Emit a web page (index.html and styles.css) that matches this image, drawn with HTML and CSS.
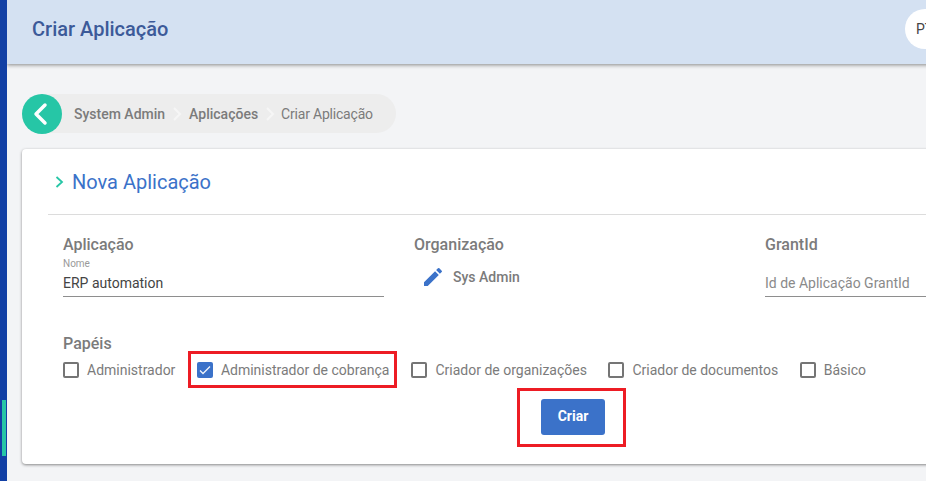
FILE: index.html
```html
<!DOCTYPE html>
<html lang="pt">
<head>
  <meta charset="UTF-8" />
  <title>Criar Aplicação</title>
  <link rel="stylesheet" href="styles.css">
</head>
<body>
  <div class="rail">
    <div class="rail-mark"></div>
  </div>

  <div class="page">
    <header class="topbar">
      <h1>Criar Aplicação</h1>
      <div class="lang">PT</div>
    </header>

    <div class="content">
      <nav class="crumbs">
        <a class="back" href="#">
          <svg width="40" height="40" viewBox="0 0 40 40"><path d="M23 11 L14 20 L23 29" fill="none" stroke="#fff" stroke-width="3.5" stroke-linecap="round" stroke-linejoin="round"/></svg>
        </a>
        <a class="crumb" href="#">System Admin</a>
        <svg class="sep" width="12" height="16" viewBox="0 0 12 16"><path d="M3 2 L9 8 L3 14" fill="none" stroke="#f6f6f6" stroke-width="2"/></svg>
        <a class="crumb" href="#">Aplicações</a>
        <svg class="sep" width="12" height="16" viewBox="0 0 12 16"><path d="M3 2 L9 8 L3 14" fill="none" stroke="#f6f6f6" stroke-width="2"/></svg>
        <span class="crumb current">Criar Aplicação</span>
      </nav>

      <section class="card">
        <div class="card-head">
          <svg width="9" height="12" viewBox="0 0 9 12"><path d="M1.5 1 L7 6 L1.5 11" fill="none" stroke="#26c6a6" stroke-width="1.8"/></svg>
          <h2>Nova Aplicação</h2>
        </div>

        <div class="fields">
          <div class="field">
            <h3>Aplicação</h3>
            <div class="input has-value">
              <label>Nome</label>
              <span>ERP automation</span>
            </div>
          </div>
          <div class="field">
            <h3>Organização</h3>
            <div class="org">
              <svg width="24" height="24" viewBox="0 0 24 24"><path fill="#3b72c9" d="M3 17.25V21h3.75L17.81 9.94l-3.75-3.75L3 17.25zM20.71 7.04a1 1 0 0 0 0-1.41l-2.34-2.34a1 1 0 0 0-1.41 0l-1.83 1.83 3.75 3.75 1.83-1.83z"/></svg>
              <span>Sys Admin</span>
            </div>
          </div>
          <div class="field">
            <h3>GrantId</h3>
            <div class="input">
              <span class="placeholder">Id de Aplicação GrantId</span>
            </div>
          </div>
        </div>

        <h3 class="roles-title">Papéis</h3>
        <div class="roles">
          <label class="role"><span class="box"></span>Administrador</label>
          <label class="role marked">
            <span class="box checked">
              <svg width="16" height="16" viewBox="0 0 16 16"><path d="M3 8.5 L6 11.5 L13 4.5" fill="none" stroke="#f2f5fb" stroke-width="1.3"/></svg>
            </span>Administrador de cobrança</label>
          <label class="role"><span class="box"></span>Criador de organizações</label>
          <label class="role"><span class="box"></span>Criador de documentos</label>
          <label class="role"><span class="box"></span>Básico</label>
        </div>

        <div class="actions">
          <div class="marked-btn">
            <button type="button">Criar</button>
          </div>
        </div>
      </section>
    </div>
  </div>
</body>
</html>
```

FILE: styles.css
```css
* {
  box-sizing: border-box;
  margin: 0;
  padding: 0;
}

html, body {
  height: 100%;
  overflow: hidden;
}

body {
  font-family: Roboto, "Liberation Sans", sans-serif;
  display: flex;
  background-color: #f3f4f6;
  color: #7b7b7b;
}

/* Left rail */
.rail {
  flex: 0 0 7px;
  background-color: #1240a5;
  position: relative;
}

.rail-mark {
  position: absolute;
  left: 2px;
  top: 400px;
  width: 4px;
  height: 56px;
  background-color: #26c6a6;
}

.page {
  flex: 0 0 1140px;
}

/* Top bar */
.topbar {
  height: 64px;
  background-color: #d4e1f2;
  box-shadow: 0 1px 4px rgba(0, 0, 0, 0.45);
  padding: 0 202px 6px 25px;
  display: flex;
  align-items: center;
  justify-content: space-between;
}

.topbar h1 {
  font-size: 20px;
  font-weight: 500;
  color: #3c5a99;
}

.lang {
  width: 40px;
  height: 40px;
  border-radius: 50%;
  background: #fff;
  color: #444;
  font-size: 14px;
  line-height: 40px;
  padding-left: 11px;
}

.content {
  padding: 30px 0 0 15px;
}

/* Breadcrumb */
.crumbs {
  display: flex;
  align-items: center;
  height: 39px;
  width: 374px;
  background-color: #ededed;
  border-radius: 20px;
  font-size: 14px;
}

.back {
  flex: 0 0 40px;
  height: 40px;
  border-radius: 50%;
  background-color: #26c6a6;
  margin-right: 12px;
}

.crumb {
  color: #7b7b7b;
  font-weight: 500;
  text-decoration: none;
}

.crumb.current {
  font-weight: 400;
  letter-spacing: -0.2px;
  margin-left: -1px;
}

.sep {
  margin: 0 6px;
}

/* Card */
.card {
  width: 1102px;
  height: 315px;
  margin-top: 16px;
  background: #fff;
  border-radius: 4px;
  box-shadow: 0 1px 3px rgba(0, 0, 0, 0.45);
  padding: 0 26px;
}

.card-head {
  height: 66px;
  border-bottom: 1px solid #dcdcdc;
  display: flex;
  align-items: center;
  gap: 8px;
  padding-left: 7px;
}

.card-head h2 {
  font-size: 20px;
  font-weight: 400;
  color: #3b72c9;
}

h3 {
  font-size: 16px;
  font-weight: 500;
  color: #7b7b7b;
}

.fields {
  display: flex;
  padding: 20px 0 0 15px;
}

.field {
  flex: 0 0 351px;
}

.input {
  width: 321px;
  height: 43px;
  border-bottom: 1px solid #8e8e8e;
  display: flex;
  flex-direction: column;
  justify-content: flex-end;
  padding-bottom: 5px;
  font-size: 14px;
  color: #444;
}

.input label {
  font-size: 10px;
  color: #9a9a9a;
  margin-bottom: 6px;
}

.placeholder {
  color: #8a8a8a;
}

.org {
  display: flex;
  align-items: center;
  gap: 8px;
  padding: 11px 0 0 7px;
  font-size: 14px;
  font-weight: 500;
}

/* Roles */
.roles-title {
  line-height: 14px;
  margin: 40px 0 0 15px;
}

.roles {
  display: flex;
  align-items: center;
  height: 37px;
  padding-left: 15px;
}

.role {
  display: flex;
  align-items: center;
  gap: 8px;
  font-size: 14px;
  margin-right: 21.5px;
}

.box {
  width: 16px;
  height: 16px;
  border: 2px solid #757575;
  border-radius: 2px;
}

.box.checked {
  border: 0;
  background-color: #3b72c9;
}

.box svg {
  display: block;
}

.role.marked {
  height: 37px;
  border: 3px solid #ed1c24;
  padding: 0 5px 0 6px;
  margin: 0 14px 0 -9px;
}

/* Submit */
.actions {
  display: flex;
  justify-content: center;
  padding-right: 3px;
}

.marked-btn {
  width: 109px;
  height: 59px;
  border: 3px solid #ed1c24;
  padding: 0 0 2px 3px;
  display: flex;
  align-items: center;
  justify-content: center;
}

button {
  width: 64px;
  height: 36px;
  background-color: #3b72c9;
  color: #fff;
  border: 0;
  border-radius: 3px;
  font-family: inherit;
  font-size: 14px;
  font-weight: 700;
  padding-bottom: 2px;
}
```
